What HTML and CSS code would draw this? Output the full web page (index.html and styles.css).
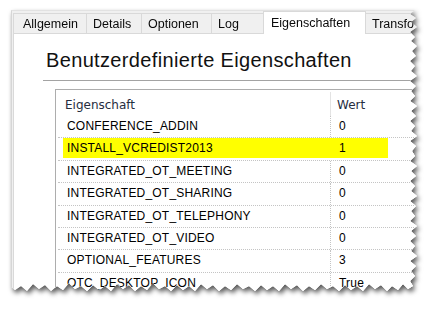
FILE: index.html
```html
<!DOCTYPE html>
<html lang="de">
<head>
<meta charset="utf-8">
<title>Benutzerdefinierte Eigenschaften</title>
<link rel="stylesheet" href="styles.css">
</head>
<body>
<div class="stage">
  <div class="shadow">
    <div class="sheet">
      <div class="tabs">
        <div class="tab first">Allgemein</div>
        <div class="tab w-details">Details</div>
        <div class="tab w-optionen">Optionen</div>
        <div class="tab w-log">Log</div>
        <div class="tab sel">Eigenschaften</div>
        <div class="tab last">Transfo</div>
      </div>
      <div class="panel">
        <h1 class="title">Benutzerdefinierte Eigenschaften</h1>
        <div class="rule"></div>
        <div class="list">
          <div class="head"><div class="c1">Eigenschaft</div><div class="c2">Wert</div></div>
          <div class="row"><div class="c1">CONFERENCE_ADDIN</div><div class="c2">0</div></div>
          <div class="row mark"><div class="c1">INSTALL_VCREDIST2013</div><div class="c2">1</div></div>
          <div class="row"><div class="c1">INTEGRATED_OT_MEETING</div><div class="c2">0</div></div>
          <div class="row"><div class="c1">INTEGRATED_OT_SHARING</div><div class="c2">0</div></div>
          <div class="row"><div class="c1">INTEGRATED_OT_TELEPHONY</div><div class="c2">0</div></div>
          <div class="row"><div class="c1">INTEGRATED_OT_VIDEO</div><div class="c2">0</div></div>
          <div class="row"><div class="c1">OPTIONAL_FEATURES</div><div class="c2">3</div></div>
          <div class="row"><div class="c1">OTC_DESKTOP_ICON</div><div class="c2">True</div></div>
        </div>
      </div>
    </div>
  </div>
</div>
</body>
</html>
```
FILE: styles.css
```css
html, body {
  margin: 0;
  background: #fff;
}

.stage {
  padding: 10px 0 0 11px;
}

.shadow {
  width: 410px;
  height: 290px;
  filter: drop-shadow(2px 3px 2.5px rgba(0, 0, 0, 0.65));
}

.sheet {
  width: 410px;
  height: 290px;
  box-sizing: border-box;
  background: #f0f0f0;
  border-left: 1px solid #d6d6d6;
  border-top: 1px solid #e2e2e2;
  padding-left: 1px;
  overflow: hidden;
  display: flex;
  flex-direction: column;
  clip-path: polygon(0 0, 404px 0, 399px 4px, 405px 8px, 400px 12px, 406px 17px, 399px 22px, 404px 27px, 400px 31px, 406px 36px, 401px 41px, 405px 46px, 399px 51px, 404px 56px, 400px 61px, 406px 66px, 399px 71px, 405px 76px, 400px 81px, 404px 86px, 399px 91px, 406px 96px, 400px 101px, 405px 106px, 399px 111px, 404px 116px, 400px 121px, 406px 126px, 399px 131px, 405px 136px, 401px 141px, 404px 146px, 399px 151px, 406px 156px, 400px 161px, 405px 166px, 399px 171px, 404px 176px, 400px 181px, 406px 186px, 399px 191px, 405px 196px, 400px 201px, 404px 206px, 399px 211px, 406px 216px, 400px 221px, 405px 226px, 399px 231px, 404px 236px, 400px 241px, 406px 246px, 399px 251px, 405px 256px, 400px 261px, 404px 266px, 399px 271px, 402px 276px, 397px 279px, 392px 274px, 387px 280px, 381px 276px, 376px 281px, 370px 275px, 364px 279px, 358px 274px, 352px 281px, 346px 276px, 340px 280px, 334px 275px, 328px 281px, 322px 276px, 316px 279px, 310px 274px, 304px 280px, 298px 276px, 292px 281px, 286px 275px, 280px 279px, 274px 274px, 268px 281px, 262px 276px, 256px 280px, 250px 275px, 244px 281px, 238px 276px, 232px 279px, 226px 274px, 220px 280px, 214px 276px, 208px 281px, 202px 275px, 196px 279px, 190px 274px, 184px 281px, 178px 276px, 172px 280px, 166px 275px, 160px 281px, 154px 276px, 148px 279px, 142px 273px, 136px 280px, 130px 276px, 124px 281px, 118px 275px, 112px 279px, 106px 274px, 100px 281px, 94px 276px, 88px 280px, 82px 275px, 76px 281px, 70px 276px, 64px 279px, 58px 273px, 52px 280px, 46px 276px, 40px 281px, 34px 275px, 28px 279px, 22px 274px, 16px 281px, 10px 276px, 4px 280px, 0 277px);
}

/* ---------- tabs ---------- */
.tabs {
  flex: none;
  display: flex;
  align-items: flex-end;
  height: 23px;
  margin-bottom: -1px;
  position: relative;
  z-index: 1;
}

.tab {
  flex: none;
  box-sizing: border-box;
  height: 20px;
  margin-bottom: 1px;
  padding: 1px 0 0 6px;
  line-height: 19px;
  font-family: "Liberation Sans", Arial, sans-serif;
  font-size: 12.5px;
  color: #0a0a0a;
  background: #f0f0f0;
  border-top: 1px solid #d9d9d9;
  border-left: 1px solid #d9d9d9;
  white-space: nowrap;
  overflow: hidden;
}

.tab.first { width: 73px; padding-left: 9px; }
.tab.w-details { width: 55px; }
.tab.w-optionen { width: 70px; }
.tab.w-log { width: 52px; }

.tab.sel {
  width: 103px;
  height: 23px;
  margin-bottom: 0;
  padding: 0 0 0 7px;
  line-height: 22px;
  background: #fff;
  border-right: 1px solid #d9d9d9;
}

.tab.last {
  width: 60px;
  border-left: none;
  border-right: 1px solid #d9d9d9;
  padding-left: 6px;
}

/* ---------- panel ---------- */
.panel {
  flex: 1;
  background: #fff;
  border-top: 1px solid #d9d9d9;
  border-left: 1px solid #d9d9d9;
  padding: 14px 0 0 29px;
}

.title {
  margin: 0;
  padding-left: 3px;
  font-family: "Liberation Sans", Arial, sans-serif;
  font-weight: normal;
  font-size: 20px;
  letter-spacing: 0.35px;
  line-height: 24px;
  color: #111;
  white-space: nowrap;
}

.rule {
  margin-top: 8px;
  width: 420px;
  height: 1px;
  background: #a3a3a3;
}

.list {
  margin: 8px 0 0 12px;
  width: 420px;
  border: 1px solid #adadad;
  background: #fff;
}

.head {
  display: flex;
  height: 26px;
  font-family: "DejaVu Sans", Verdana, sans-serif;
  font-size: 12px;
  color: #262d40;
}

.head .c1 {
  box-sizing: border-box;
  width: 275px;
  height: 24px;
  margin-top: 2px;
  padding: 5px 0 0 9px;
  line-height: 16px;
  border-right: 1px solid #e3e3e3;
}

.head .c2 {
  padding: 7px 0 0 6px;
  line-height: 16px;
}

.row {
  display: flex;
  margin-left: 2px;
  height: 21.4px;
  border-bottom: 1px dotted #c4c4c4;
  font-family: "Liberation Sans", Arial, sans-serif;
  font-size: 12px;
  letter-spacing: 0.2px;
  line-height: 21.4px;
  color: #000;
  white-space: nowrap;
}

.row .c1 {
  box-sizing: border-box;
  width: 273px;
  padding-left: 9px;
  border-right: 1px dotted #c4c4c4;
}

.row .c2 {
  padding-left: 8px;
}

.row.mark {
  background: linear-gradient(#ffff00, #ffff00) 5px 0 / 325px 20px no-repeat;
}

.row.mark .c1 {
  border-right-color: transparent;
}
```
